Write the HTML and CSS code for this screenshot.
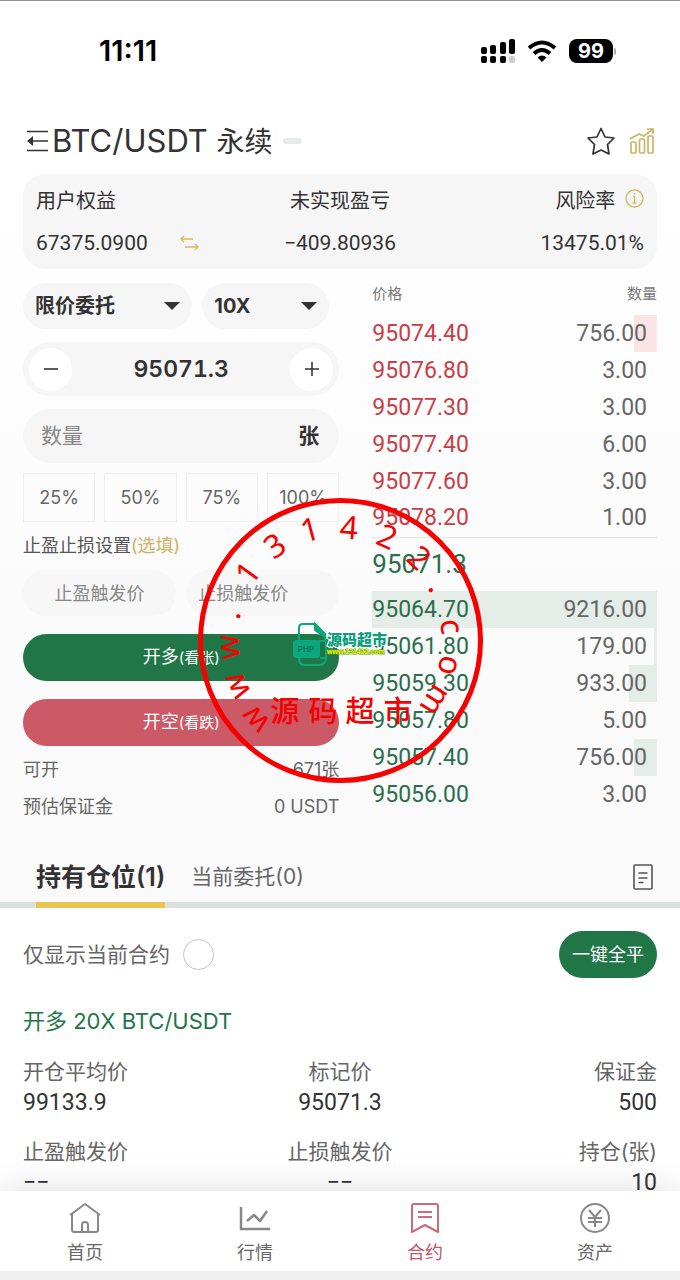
FILE: index.html
```
<!DOCTYPE html>
<html lang="zh-CN">
<head>
    <meta charset="UTF-8">
    <meta name="viewport" content="width=device-width, initial-scale=1.0">
    <title>BTC/USDT 永续</title>
    <link rel="stylesheet" href="styles.css">
</head>
<body>
<div class="app">

    <main class="content">
        <div class="top">
            <div class="status">
                <span class="clock">11:11</span>
                <div class="status-icons">
                    <svg width="34" height="24" viewBox="0 0 34 24">
                        <rect x="0" y="8" width="6" height="7" rx="2"/>
                        <rect x="9" y="6" width="6" height="9" rx="2"/>
                        <rect x="19" y="3" width="6" height="12" rx="2"/>
                        <rect x="28" y="0" width="6" height="15" rx="2"/>
                        <rect x="0" y="17" width="6" height="7" rx="2"/>
                        <rect x="9" y="17" width="6" height="7" rx="2"/>
                        <rect x="19" y="17" width="6" height="7" rx="2"/>
                        <rect x="28" y="17" width="6" height="7" rx="2" fill="#ccc"/>
                    </svg>
                    <svg width="30" height="22" viewBox="0 0 30 22" fill="none" stroke="#000" stroke-width="4">
                        <path d="M2 8Q15-3 28 8"/>
                        <path d="M7 13.500Q15 6.500 23 13.500"/>
                        <path d="M10.500 17.500Q15 13.500 19.500 17.500L15 22z" fill="#000" stroke="none"/>
                    </svg>
                    <span class="battery">99</span>
                </div>
            </div>

            <header class="header">
                <button class="icon-btn" aria-label="菜单">
                    <svg width="24" height="22" viewBox="0 0 24 22" fill="none" stroke="#333" stroke-width="1.600">
                        <path d="M2 1.500h21M8 11h15M2 20.500h21"/>
                        <path d="M2 11l6-5v10z" fill="#333" stroke="none"/>
                    </svg>
                </button>
                <h1>BTC/USDT <span>永续</span></h1>
                <span class="dash"></span>
                <button class="icon-btn star" aria-label="收藏">
                    <svg width="28" height="28" viewBox="0 0 28 28" fill="none" stroke="#333" stroke-width="1.700" stroke-linejoin="round">
                        <path d="M14 1.500l4 8.500 9 1-6.500 6.500 1.500 9.500-8-4-8 4 1.500-9.500L1 11l9-1z"/>
                    </svg>
                </button>
                <button class="icon-btn" aria-label="图表">
                    <svg width="26" height="28" viewBox="0 0 26 28" fill="none" stroke="#cbb565" stroke-width="1.700">
                        <rect x="2" y="15" width="5" height="11" rx="1"/>
                        <rect x="10.500" y="12" width="5" height="14" rx="1"/>
                        <rect x="19" y="9" width="5" height="17" rx="1"/>
                        <path d="M1 12l9-5 5 2 9-7M18 2h6v5"/>
                    </svg>
                </button>
            </header>

            <section class="stats">
                <div>
                    <p>用户权益</p>
                    <p class="with-swap">67375.0900
                        <svg width="19" height="16" viewBox="0 0 19 16" fill="none" stroke="#dcb962" stroke-width="1.400">
                            <path d="M13 4H1M4 1L1 4l3 3M5 12h13M15 9l3 3-3 3"/>
                        </svg>
                    </p>
                </div>
                <div class="center">
                    <p>未实现盈亏</p>
                    <p>−409.80936</p>
                </div>
                <div class="right">
                    <p>风险率
                        <svg class="info" width="19" height="19" viewBox="0 0 19 19" fill="none" stroke="#d2bb68" stroke-width="1.400">
                            <circle cx="9.500" cy="9.500" r="8.500"/>
                            <path d="M9.500 4v1.500M8 7.500h1.500V14M7.500 14h4"/>
                        </svg>
                    </p>
                    <p>13475.01%</p>
                </div>
            </section>

            <section class="trade">
                <form class="order">
                    <div class="selects">
                        <label class="pill">
                            <select aria-label="委托类型"><option>限价委托</option></select>
                        </label>
                        <label class="pill">
                            <select aria-label="杠杆"><option>10X</option></select>
                        </label>
                    </div>

                    <div class="field price">
                        <button type="button" aria-label="减">
                            <svg width="16" height="16" viewBox="0 0 16 16" stroke="#333" stroke-width="1.600"><path d="M1 8h14"/></svg>
                        </button>
                        <input type="text" value="95071.3" aria-label="价格">
                        <button type="button" aria-label="加">
                            <svg width="16" height="16" viewBox="0 0 16 16" stroke="#333" stroke-width="1.600"><path d="M1 8h14M8 1v14"/></svg>
                        </button>
                    </div>

                    <div class="field amount">
                        <input type="text" id="amount" placeholder="数量">
                        <label for="amount">张</label>
                    </div>

                    <div class="percents">
                        <button type="button">25%</button>
                        <button type="button">50%</button>
                        <button type="button">75%</button>
                        <button type="button">100%</button>
                    </div>

                    <p class="line-title">止盈止损设置<span class="gold">(选填)</span></p>

                    <div class="triggers">
                        <input class="tp" type="text" placeholder="止盈触发价" aria-label="止盈触发价">
                        <input class="sl" type="text" placeholder="止损触发价" aria-label="止损触发价">
                    </div>

                    <button type="button" class="open long">开多<small>(看张)</small></button>
                    <button type="button" class="open short">开空<small>(看跌)</small></button>

                    <div class="pair"><span>可开</span><span>671张</span></div>
                    <div class="pair"><span>预估保证金</span><span>0 USDT</span></div>
                </form>

                <table class="book">
                    <thead>
                        <tr><th>价格</th><th>数量</th></tr>
                    </thead>
                    <tbody class="asks">
                        <tr style="--depth: 8%"><td>95074.40</td><td>756.00</td></tr>
                        <tr><td>95076.80</td><td>3.00</td></tr>
                        <tr><td>95077.30</td><td>3.00</td></tr>
                        <tr><td>95077.40</td><td>6.00</td></tr>
                        <tr><td>95077.60</td><td>3.00</td></tr>
                        <tr><td>95078.20</td><td>1.00</td></tr>
                    </tbody>
                    <tbody class="bids">
                        <tr class="last"><td colspan="2">95071.3</td></tr>
                        <tr style="--depth: 100%"><td>95064.70</td><td>9216.00</td></tr>
                        <tr style="--depth: 1%"><td>95061.80</td><td>179.00</td></tr>
                        <tr style="--depth: 10%"><td>95059.30</td><td>933.00</td></tr>
                        <tr><td>95057.80</td><td>5.00</td></tr>
                        <tr style="--depth: 8%"><td>95057.40</td><td>756.00</td></tr>
                        <tr><td>95056.00</td><td>3.00</td></tr>
                    </tbody>
                </table>
            </section>

            <div class="tabs">
                <button class="tab active">持有仓位(1)</button>
                <button class="tab">当前委托(0)</button>
                <button class="icon-btn records" aria-label="记录">
                    <svg width="20" height="26" viewBox="0 0 20 26" fill="none" stroke="#555" stroke-width="1.600">
                        <rect x="1" y="1" width="18" height="24" rx="1"/>
                        <path d="M5.500 9h9M5.500 14h9M5.500 18.500h5"/>
                    </svg>
                </button>
            </div>
        </div>

        <section class="positions">
            <div class="filter">
                <label for="only-current">仅显示当前合约</label>
                <input type="checkbox" id="only-current">
                <button class="close-all">一键全平</button>
            </div>
            <h2>开多 20X BTC/USDT</h2>
            <div class="details">
                <div><p>开仓平均价</p><strong>99133.9</strong></div>
                <div class="center"><p>标记价</p><strong>95071.3</strong></div>
                <div class="right"><p>保证金</p><strong>500</strong></div>
                <div><p>止盈触发价</p><strong>−−</strong></div>
                <div class="center"><p>止损触发价</p><strong>−−</strong></div>
                <div class="right"><p>持仓(张)</p><strong>10</strong></div>
            </div>
        </section>

        <!-- round stamp over the order area -->
        <svg class="stamp" width="300" height="300" viewBox="0 0 300 300">
            <circle cx="150.500" cy="150.500" r="140" fill="none" stroke="#f60000" stroke-width="5"/>
            <g class="ring">
                <text transform="translate(67 228) rotate(-133)" y="8">w</text>
                <text transform="translate(49 195) rotate(-114)" y="8">w</text>
                <text transform="translate(41 157) rotate(-94)" y="8">w</text>
                <text transform="translate(48 126) rotate(-76)" y="2">.</text>
                <text transform="translate(58 83) rotate(-54)" y="11">1</text>
                <text transform="translate(85 56) rotate(-35)" y="11">3</text>
                <text transform="translate(120 40) rotate(-15)" y="11">1</text>
                <text transform="translate(159 38) rotate(4)" y="11">4</text>
                <text transform="translate(197 47) rotate(24)" y="11">2</text>
                <text transform="translate(229 68) rotate(43)" y="11">2</text>
                <text transform="translate(241 100) rotate(61)" y="2">.</text>
                <text transform="translate(259 137) rotate(83)" y="8">c</text>
                <text transform="translate(257 175) rotate(103)" y="8">o</text>
                <text transform="translate(243 209) rotate(122)" y="8">m</text>
            </g>
            <text class="seal" x="95 133 170 208" y="232">源码超市</text>
            <g fill="none" stroke="#0aa87c" stroke-width="2">
                <path d="M109 150v-12q0-4 4-4h12l10 10v7M109 167q0 8 5 8h15q6 0 7-6"/>
                <path d="M125 134l10 10v3l-10-7z" fill="#0aa87c"/>
                <rect x="104" y="151" width="25" height="16" rx="2" fill="#0aa87c"/>
                <path d="M129 151h7v17h-6"/>
            </g>
            <text class="php" x="116" y="162">PHP</text>
            <text class="logo-name" x="137" y="155">源码超市</text>
            <text class="logo-url" x="137" y="164">www.131422.com</text>
        </svg>
    </main>

    <nav class="nav">
        <a href="#">
            <svg width="32" height="32" viewBox="0 0 32 32">
                <path d="M1 13L16 2l15 11M3 12v16q0 2 2 2h22q2 0 2-2V12M13 30v-7q0-3 3-3t3 3v7"/>
            </svg>
            首页
        </a>
        <a href="#">
            <svg width="32" height="32" viewBox="0 0 32 32">
                <path d="M2 5v22h29M8 19l7-6 6 6 7-10" stroke-width="2.500"/>
            </svg>
            行情
        </a>
        <a href="#" class="current">
            <svg width="32" height="32" viewBox="0 0 32 32">
                <path d="M5 2h22q2 0 2 2v26l-13-7-13 7V4q0-2 2-2zM9 10h14M9 15h14"/>
            </svg>
            合约
        </a>
        <a href="#">
            <svg width="32" height="32" viewBox="0 0 32 32">
                <circle cx="16" cy="16" r="14"/>
                <path d="M10 8l6 7 6-7M9 16h14M9 20h14M16 15v10"/>
            </svg>
            资产
        </a>
    </nav>
</div>
</body>
</html>
```

FILE: styles.css
```
* {
    box-sizing: border-box;
}

body {
    margin: 0;
    font-family: Inter, "Noto Sans CJK SC", sans-serif;
    font-size: 18px;
    line-height: 26px;
    color: #333;
    background-color: #fff;
}

h1, h2, p {
    margin: 0;
    font-weight: 400;
}

button, input, select {
    font: inherit;
    color: inherit;
    border: 0;
    padding: 0;
    margin: 0;
    background: none;
    min-width: 0;
}

button {
    cursor: pointer;
}

input::placeholder {
    color: #888;
    opacity: 1;
}

svg {
    flex: none;
}

.app {
    height: 100vh;
    display: flex;
    flex-direction: column;
}

.content {
    flex: 1;
    min-height: 0;
    position: relative;
    overflow-y: auto;
    scrollbar-width: none;
}

.top {
    border-top: 1px solid #969396;
    background: linear-gradient(#fff 20%, #fafafa 80%);
}

.center {
    text-align: center;
}

.right {
    text-align: right;
}

.gold {
    color: #cbb565;
}

/* status bar */
.status {
    height: 107px;
    padding: 0 67px 8px 99px;
    display: flex;
    align-items: center;
    justify-content: space-between;
    color: #000;
}

.clock {
    font-size: 29px;
    font-weight: 600;
}

.status-icons {
    display: flex;
    align-items: center;
    gap: 12px;
}

.battery {
    position: relative;
    width: 44px;
    background-color: #000;
    color: #fff;
    border-radius: 8px;
    font-size: 20px;
    font-weight: 700;
    line-height: 24px;
    text-align: center;
}

.battery::after {
    content: "";
    position: absolute;
    top: 9px;
    right: -3px;
    width: 2px;
    height: 7px;
    border-radius: 0 2px 2px 0;
    background-color: #aaa;
}

/* header */
.header {
    height: 66px;
    padding: 0 25px;
    display: flex;
    align-items: center;
}

.header h1 {
    font-size: 31px;
    line-height: 36px;
    margin-left: 3px;
}

.header h1 span {
    font-size: 28px;
}

.icon-btn {
    display: flex;
}

.dash {
    width: 19px;
    height: 6px;
    margin-left: 10px;
    border-radius: 3px;
    background-color: #e6ecea;
}

.star {
    margin-left: auto;
    margin-right: 14px;
}

/* account numbers */
.stats {
    margin: 0 23px;
    padding: 14px 13px 13px;
    display: grid;
    grid-template-columns: repeat(3, 1fr);
    border-radius: 22px;
    background-color: #f6f6f6;
    font-size: 20px;
}

.stats p + p {
    margin-top: 16px;
    font-family: Roboto, sans-serif;
    font-size: 21px;
}

.with-swap {
    display: flex;
    align-items: center;
    gap: 32px;
}

.info {
    margin-left: 4px;
}

/* order form + order book */
.trade {
    padding: 14px 23px 0;
    display: grid;
    grid-template-columns: minmax(0, 10fr) minmax(0, 9fr);
    gap: 33px;
    align-items: start;
}

.selects {
    display: flex;
    gap: 10px;
    margin-right: 10px;
}

.pill {
    flex: 4;
    height: 46px;
    display: grid;
    align-items: center;
    border-radius: 23px;
    background-color: #f6f6f6;
}

.pill + .pill {
    flex: 3;
}

.pill select,
.pill::after {
    grid-area: 1 / 1;
}

.pill select {
    appearance: none;
    height: 46px;
    padding-left: 12px;
    font-size: 20px;
    font-weight: 700;
}

.pill::after {
    content: "";
    justify-self: end;
    margin-right: 12px;
    border: 8px solid transparent;
    border-top-color: #333;
    border-bottom: 0;
    pointer-events: none;
}

.field {
    height: 54px;
    margin-top: 13px;
    display: flex;
    align-items: center;
    border-radius: 27px;
    background-color: #f6f6f6;
}

.field input {
    flex: 1;
    width: 100%;
}

.price {
    padding: 0 6px;
}

.price button {
    flex: none;
    width: 43px;
    height: 43px;
    display: flex;
    align-items: center;
    justify-content: center;
    border-radius: 50%;
    background-color: #fff;
}

.price input {
    font-size: 23px;
    font-weight: 600;
    font-variant-numeric: tabular-nums;
    text-align: center;
}

.amount {
    padding: 0 20px 0 18px;
    font-size: 21px;
}

.amount label {
    font-weight: 700;
}

.percents {
    margin-top: 10px;
    display: grid;
    grid-template-columns: repeat(4, 1fr);
    gap: 9px;
}

.percents button {
    height: 49px;
    border: 1px solid #efeff1;
    color: #666;
}

.line-title {
    margin-top: 11px;
    color: #555;
}

.triggers {
    margin-top: 11px;
    display: grid;
    grid-template-columns: 1fr 1fr;
    gap: 10px;
}

.triggers input {
    width: 100%;
    height: 46px;
    border-radius: 23px;
    background-color: #f7f7f7;
}

.tp {
    text-align: center;
}

.triggers .sl {
    padding-left: 12px;
}

.open {
    display: block;
    width: 100%;
    height: 47px;
    margin-top: 18px;
    border-radius: 24px;
    color: #fff;
}

.open small {
    font-size: 15px;
}

.long {
    background-color: #207647;
}

.short {
    background-color: #cc5966;
}

.pair {
    margin-top: 11px;
    display: flex;
    justify-content: space-between;
    color: #666;
}

.book {
    width: 100%;
    border-collapse: collapse;
}

.book th {
    height: 32px;
    padding: 0;
    font-size: 15px;
    font-weight: 400;
    line-height: 22px;
    text-align: left;
    vertical-align: top;
    color: #777;
}

.book th:last-child {
    text-align: right;
}

.book td {
    height: 37px;
    padding: 0;
    font-family: Roboto, sans-serif;
    font-size: 23px;
}

.book td + td {
    padding-right: 10px;
    text-align: right;
    color: #666;
}

.asks tr {
    color: #ca3d47;
    background: linear-gradient(#fbe4e6, #fbe4e6) right / var(--depth, 0%) 100% no-repeat;
}

.bids tr {
    color: #2b6e4c;
    background: linear-gradient(#e5ede9, #e5ede9) right / var(--depth, 0%) 100% no-repeat;
}

.book .last td {
    height: 54px;
    border-top: 1px solid #e4e7e6;
    font-size: 26px;
}

/* tabs */
.tabs {
    height: 66px;
    margin-top: 22px;
    padding: 0 27px 0 36px;
    display: flex;
    border-bottom: 6px solid #d9e0dd;
}

.tab {
    height: 66px;
    padding-top: 10px;
    margin-right: 26px;
    font-size: 21px;
    color: #666;
    border-bottom: 6px solid transparent;
}

.tab.active {
    font-size: 25px;
    font-weight: 600;
    color: #333;
    border-bottom-color: #e9c44f;
}

.records {
    margin-left: auto;
    padding-top: 10px;
    align-items: center;
}

/* positions */
.positions {
    padding: 23px 23px 0;
    font-size: 21px;
    color: #666;
}

.filter {
    display: flex;
    align-items: center;
}

.filter input {
    appearance: none;
    width: 31px;
    height: 31px;
    margin-left: 13px;
    border: 1px solid #c4c4c4;
    border-radius: 50%;
}

.close-all {
    height: 47px;
    margin-left: auto;
    padding: 0 13px;
    border-radius: 24px;
    background-color: #207647;
    color: #fff;
    font-size: 18px;
}

.positions h2 {
    margin-top: 30px;
    font-size: 22px;
    color: #207647;
}

.details {
    margin-top: 22px;
    display: grid;
    grid-template-columns: repeat(3, 1fr);
    row-gap: 18px;
    line-height: 31px;
}

.details strong {
    font-family: Roboto, sans-serif;
    font-size: 23px;
    font-weight: 400;
    color: #333;
}

/* stamp */
.stamp {
    position: absolute;
    top: 490px;
    left: calc(50% - 150px);
    pointer-events: none;
}

.ring,
.seal {
    fill: #f60000;
    text-anchor: middle;
}

.ring {
    font-family: "Noto Sans", sans-serif;
    font-size: 32px;
}

.seal {
    font-size: 29px;
    font-weight: 500;
}

.php {
    font-size: 8px;
    font-weight: 700;
    text-anchor: middle;
    fill: #08785d;
}

.logo-name {
    font-size: 15px;
    font-weight: 900;
    fill: #0a9f7c;
    stroke: #fff;
    stroke-width: 2px;
    paint-order: stroke;
}

.logo-url {
    font-family: "Liberation Sans", sans-serif;
    font-size: 7px;
    font-weight: 700;
    fill: #f4f400;
    stroke: #4fa52c;
    stroke-width: 1px;
    paint-order: stroke;
}

/* bottom nav */
.nav {
    position: relative;
    height: 89px;
    display: grid;
    grid-template-columns: repeat(4, 1fr);
    background-color: #fff;
    border-bottom: 9px solid #f0f0f0;
    box-shadow: 0 0 36px rgba(0, 0, 0, 0.14);
}

.nav a {
    display: flex;
    flex-direction: column;
    align-items: center;
    padding-top: 11px;
    gap: 6px;
    color: #666;
    text-decoration: none;
}

.nav svg {
    fill: none;
    stroke: #888;
    stroke-width: 2;
    stroke-linejoin: round;
}

.nav .current {
    color: #c65463;
}

.nav .current svg {
    stroke: #cb6c78;
}
```
